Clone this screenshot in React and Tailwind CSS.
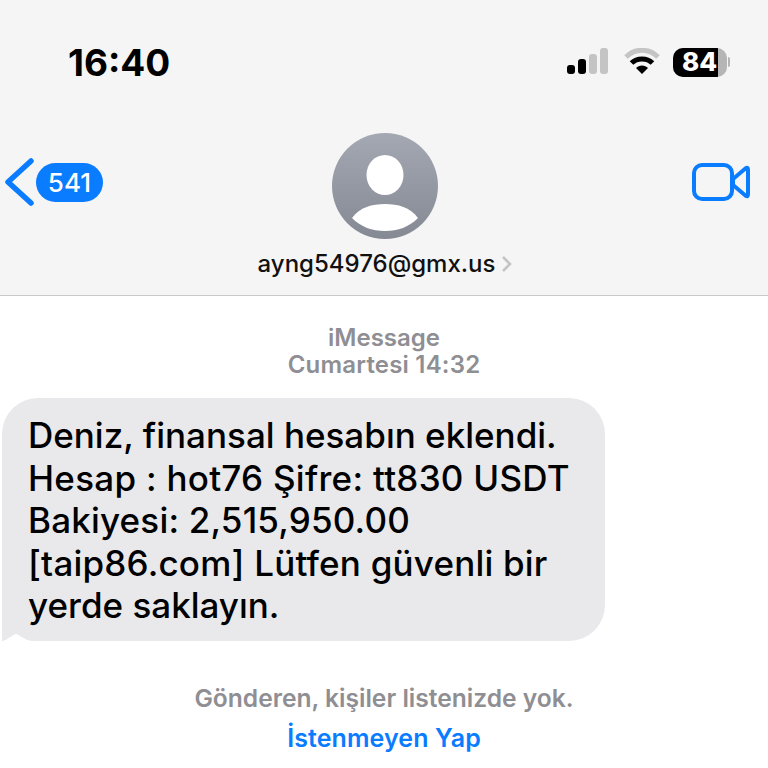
import React from 'react';

const SignalIcon = () => (
  <svg width="44" height="28" viewBox="0 0 44 28">
    <rect x="0" y="17" width="8" height="9" rx="3" fill="#000" />
    <rect x="11" y="11" width="8" height="15" rx="3" fill="#000" />
    <rect x="22" y="6" width="8" height="20" rx="3" fill="#c4c4c4" />
    <rect x="33" y="0" width="8" height="26" rx="3" fill="#c4c4c4" />
  </svg>
);

const WifiIcon = () => (
  <svg width="36" height="28" viewBox="0 0 36 28">
    <path d="M2 9 C11 0 25 0 34 9" fill="none" stroke="#c4c4c4" strokeWidth="5" strokeLinecap="butt" />
    <path d="M7.5 15 C13 9.500 23 9.500 28.500 15" fill="none" stroke="#000" strokeWidth="5" />
    <path d="M12 20 C15 16.500 21 16.500 24 20 L18 26 Z" fill="#000" />
  </svg>
);

const BatteryIcon = () => (
  <div className="flex items-center">
    <div className="relative w-[54px] h-[29px] rounded-[10px] bg-[#b5b5b5] overflow-hidden">
      <div className="h-full w-[45px] bg-black flex items-center justify-center">
        <span className="text-white font-extrabold text-[26px] leading-none pl-[8px]">84</span>
      </div>
    </div>
    <div className="w-[2px] h-[10px] bg-[#b5b5b5] rounded-r-sm ml-[1px]"></div>
  </div>
);

const BackIcon = () => (
  <svg width="30" height="48" viewBox="0 0 30 48">
    <path d="M27 3 L4 24 L27 45" fill="none" stroke="#0a7cff" strokeWidth="5.500" strokeLinecap="round" strokeLinejoin="round" />
  </svg>
);

const VideoIcon = () => (
  <svg width="58" height="40" viewBox="0 0 58 40">
    <rect x="2" y="3" width="38" height="34" rx="8" fill="none" stroke="#0a7cff" strokeWidth="4" />
    <path d="M41 17 L54 6 Q56 5 56 8 V32 Q56 35 54 34 L41 23 Z" fill="none" stroke="#0a7cff" strokeWidth="4" strokeLinejoin="round" />
  </svg>
);

const Avatar = () => (
  <svg width="106" height="106" viewBox="0 0 106 106">
    <defs>
      <linearGradient id="avatarBg" x1="0" y1="0" x2="0" y2="1">
        <stop offset="0" stopColor="#a4a8b3" />
        <stop offset="1" stopColor="#858994" />
      </linearGradient>
    </defs>
    <circle cx="53" cy="53" r="53" fill="url(#avatarBg)" />
    <ellipse cx="53" cy="42" rx="18.500" ry="20" fill="#fff" />
    <path d="M20 85 C28 74 40 71 53 71 C66 71 78 74 86 85 C77 94 66 98 53 98 C40 98 29 94 20 85 Z" fill="#fff" />
  </svg>
);

const App = () => {
  return (
    <div className="w-[768px] h-[768px] overflow-hidden bg-white font-['Inter',sans-serif] text-black">
      {/* Header */}
      <div className="h-[296px] bg-[#f5f5f5] border-b border-[#c9c9c9] flex flex-col">
        <div className="flex items-center justify-between h-[48px] mt-[38px] pl-[68px] pr-[38px]">
          <span className="text-[37px] font-bold leading-none">16:40</span>
          <div className="flex items-center gap-[13px]">
            <SignalIcon />
            <WifiIcon />
            <BatteryIcon />
          </div>
        </div>
        <div className="flex items-start justify-between mt-[47px] pl-[4px] pr-[2px]">
          <div className="flex items-center gap-[2px] w-[200px] mt-[25px]">
            <BackIcon />
            <div className="h-[39px] w-[67px] rounded-full bg-[#0a7cff] text-white text-[26px] font-medium flex items-center justify-center">541</div>
          </div>
          <div className="flex flex-col items-center">
            <Avatar />
            <div className="flex items-center gap-[6px] mt-[11px]">
              <span className="text-[24px] font-medium leading-[28px] text-[#111]">ayng54976@gmx.us</span>
              <svg width="11" height="18" viewBox="0 0 11 18">
                <path d="M2 2 L9 9 L2 16" fill="none" stroke="#c4c4c4" strokeWidth="2.500" />
              </svg>
            </div>
          </div>
          <div className="w-[200px] flex justify-end mt-[29px] pr-[16px]">
            <VideoIcon />
          </div>
        </div>
      </div>

      {/* Meta */}
      <div className="flex flex-col items-center mt-[28px] text-[#8e8e93] text-[24px] font-semibold leading-[27px]">
        <span>iMessage</span>
        <span className="tracking-[0.2px]">Cumartesi 14:32</span>
      </div>

      {/* Bubble */}
      <div className="relative w-[603px] h-[243px] ml-[2px] mt-[20px] bg-[#e9e9eb] rounded-[36px] rounded-bl-none pl-[26px] pt-[16px]">
        <div className="text-[35px] font-medium leading-[42.500px] text-black">
          <p>Deniz, finansal hesabın eklendi.</p>
          <p className="tracking-[0.27px]">Hesap : hot76 Şifre: tt830 USDT</p>
          <p className="tracking-[0.18px]">Bakiyesi: 2,515,950.00</p>
          <p className="tracking-[0.2px]">[taip86.com] Lütfen güvenli bir</p>
          <p>yerde saklayın.</p>
        </div>
        <svg className="absolute left-0 bottom-0" width="30" height="8" viewBox="0 0 30 8">
          <path d="M0 8 C6 7 10 2 14 1 C18 2 22 7 30 8 Z" fill="#fff" />
        </svg>
      </div>

      {/* Footer */}
      <div className="flex flex-col items-center mt-[37px] font-semibold leading-[40px]">
        <span className="text-[#8e8e93] text-[24.600px]">Gönderen, kişiler listenizde yok.</span>
        <span className="text-[#0a7cff] text-[25px] tracking-[0.1px]">İstenmeyen Yap</span>
      </div>
    </div>
  );
};

export default App;
